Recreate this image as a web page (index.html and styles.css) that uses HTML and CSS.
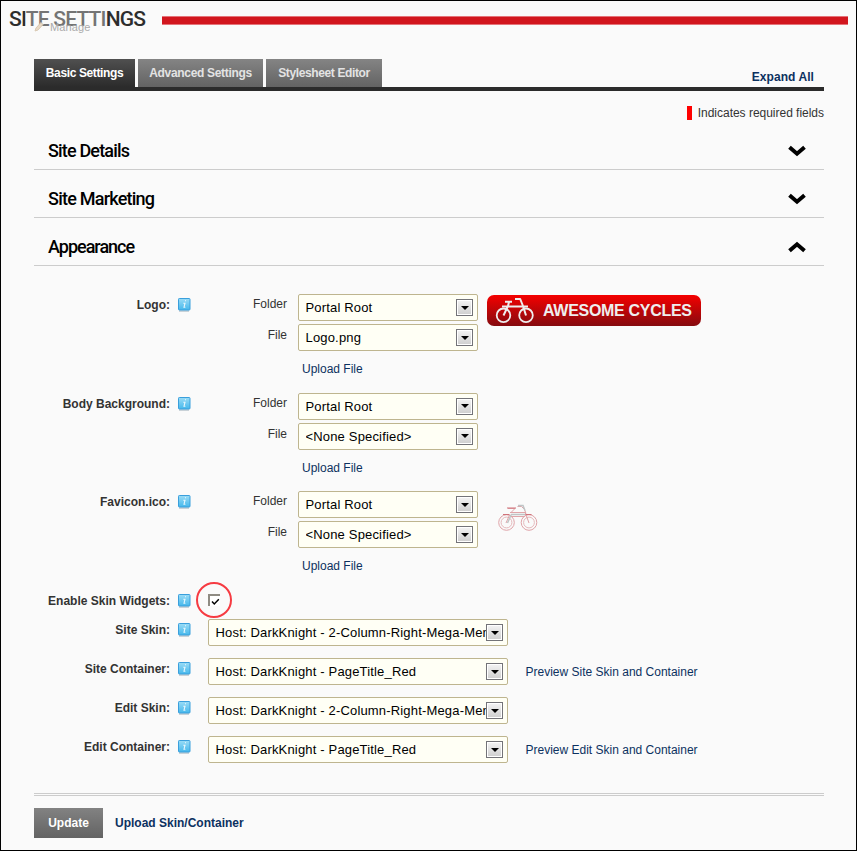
FILE: index.html
```html
<!DOCTYPE html>
<html lang="en">
<head>
<meta charset="utf-8">
<title>Site Settings</title>
<link rel="stylesheet" href="styles.css">
</head>
<body>
<svg class="defs" width="0" height="0" aria-hidden="true">
  <defs>
    <linearGradient id="blue" x1="0" y1="0" x2="0" y2="1"><stop offset="0" stop-color="#9bdcf6"/><stop offset="1" stop-color="#45b8ec"/></linearGradient>
    <symbol id="info" viewBox="0 0 13 14">
      <rect x="1" y="12" width="10" height="2" fill="#c9d2d8"/>
      <rect x=".5" y=".5" width="11.5" height="11.5" rx=".8" fill="url(#blue)" stroke="#3a9fdc"/>
      <path d="M7 2.8h1M5.3 5.2h1.7L6 9.2h1.4" fill="none" stroke="#fff" stroke-width="1.1" opacity=".85"/>
    </symbol>
    <symbol id="down" viewBox="0 0 18 12"><path d="M1.500 2.300 9 8.700 16.500 2.300" fill="none" stroke="#000" stroke-width="4"/></symbol>
    <symbol id="up" viewBox="0 0 18 12"><path d="M1.500 9.700 9 3.300 16.500 9.700" fill="none" stroke="#000" stroke-width="4"/></symbol>
    <symbol id="bike" viewBox="0 0 40 27">
      <g fill="none" stroke="currentColor" stroke-linejoin="round">
        <circle cx="8.5" cy="18.3" r="6.800" stroke-width="1.8"/><circle cx="31" cy="18.3" r="6.800" stroke-width="1.8"/>
        <path d="M8.5 18.500 12.500 10M12.500 9.500H28M13 9l1-4M10 4.800h7M20 2h5.200l3 7.500 2.800 9M7 9.500h6M28 9.500h5" stroke-width="2"/>
      </g>
    </symbol>
  </defs>
</svg>
<main class="page">
  <header class="title">
    <h1>SITE SETTINGS</h1><span class="rule"></span>
    <div class="manage"><svg width="10" height="11" viewBox="0 0 10 11"><path d="M1 10 2 7 7 1.5 9 3.5 4 9Z" fill="#ead9c4" stroke="#d9cab4"/></svg><span>Manage</span></div>
  </header>
  <div class="content">
    <nav class="tabs">
      <a class="tab active t1">Basic Settings</a><a class="tab t2">Advanced Settings</a><a class="tab t3">Stylesheet Editor</a>
      <a class="expand">Expand All</a>
    </nav>
    <p class="required"><i></i><span>Indicates required fields</span></p>
    <h2 class="section"><span class="s1">Site Details</span><svg width="18" height="12"><use href="#down"/></svg></h2>
    <h2 class="section"><span class="s2">Site Marketing</span><svg width="18" height="12"><use href="#down"/></svg></h2>
    <h2 class="section"><span class="s3">Appearance</span><svg width="18" height="12"><use href="#up"/></svg></h2>

    <div class="assets">
      <div class="asset">
        <label>Logo:</label><svg class="info"><use href="#info"/></svg>
        <div class="names"><span>Folder</span><span>File</span></div>
        <div class="picks"><div class="select"><span>Portal Root</span><b></b></div><div class="select"><span>Logo.png</span><b></b></div><a>Upload File</a></div>
        <div class="logo"><svg width="40" height="27"><use href="#bike"/></svg><span>AWESOME CYCLES</span></div>
      </div>
      <div class="asset">
        <label>Body Background:</label><svg class="info"><use href="#info"/></svg>
        <div class="names"><span>Folder</span><span>File</span></div>
        <div class="picks"><div class="select"><span>Portal Root</span><b></b></div><div class="select"><span>&lt;None Specified&gt;</span><b></b></div><a>Upload File</a></div>
      </div>
      <div class="asset">
        <label>Favicon.ico:</label><svg class="info"><use href="#info"/></svg>
        <div class="names"><span>Folder</span><span>File</span></div>
        <div class="picks"><div class="select"><span>Portal Root</span><b></b></div><div class="select"><span>&lt;None Specified&gt;</span><b></b></div><a>Upload File</a></div>
        <svg class="favicon" width="40" height="28" viewBox="0 0 40 28">
          <g fill="none" stroke="#dfa3a8"><circle cx="8.5" cy="18.5" r="7.8"/><circle cx="31" cy="18.5" r="7.8"/><circle cx="8.5" cy="18.5" r="5.4" stroke="#e5b9bc"/><circle cx="31" cy="18.5" r="5.4" stroke="#e5b9bc"/>
          <path d="M8 19 12 10M27 8l4 11M10 4.500h7l-4 4M19.500 2.500h4l3 3 1.500 4"/><path d="M13 10.500h14M9.500 19l3.500-8M20 1.500h5l2 5" stroke="#bfc5c6" stroke-width="1.500"/><path d="M12 8.500h15M13 12.500h14" stroke="#e0a5a9"/><path d="M5 10.500h6M27.500 10.500h6M9 4h9" stroke="#d0737a"/></g>
        </svg>
      </div>
    </div>

    <div class="widgets"><label>Enable Skin Widgets:</label><svg class="info"><use href="#info"/></svg>
      <div class="ring"><div class="check"><svg width="9" height="8" viewBox="0 0 9 8"><path d="M1 3.500 3.300 6 7.800 1.300" fill="none" stroke="#000" stroke-width="1.500"/></svg></div></div>
    </div>
    <div class="skins">
      <div class="skin"><label>Site Skin:</label><svg class="info"><use href="#info"/></svg><div class="select wide"><span>Host: DarkKnight - 2-Column-Right-Mega-Menu</span><b></b></div></div>
      <div class="skin"><label>Site Container:</label><svg class="info"><use href="#info"/></svg><div class="select wide"><span>Host: DarkKnight - PageTitle_Red</span><b></b></div><a>Preview Site Skin and Container</a></div>
      <div class="skin"><label>Edit Skin:</label><svg class="info"><use href="#info"/></svg><div class="select wide"><span>Host: DarkKnight - 2-Column-Right-Mega-Menu</span><b></b></div></div>
      <div class="skin"><label>Edit Container:</label><svg class="info"><use href="#info"/></svg><div class="select wide"><span>Host: DarkKnight - PageTitle_Red</span><b></b></div><a>Preview Edit Skin and Container</a></div>
    </div>
    <footer><button>Update</button><a>Upload Skin/Container</a></footer>
  </div>
</main>
</body>
</html>
```
FILE: styles.css
```css
* { box-sizing: border-box; }
body { margin: 0; font: 12px/16px "Liberation Sans", Arial, sans-serif; color: #333; }
.defs { position: absolute; }
.page { width: 857px; height: 851px; border: 1px solid #000; background: #fafafa; overflow: hidden; }
h1, h2, p { margin: 0; font-weight: normal; }
a { color: #0c3160; white-space: nowrap; }
svg { flex: none; display: block; }

.title { position: relative; display: flex; height: 58px; padding: 0 8px 0 8px; }
h1 { width: 153px; padding-top: 5px; font: 500 21px/27px Roboto, sans-serif; letter-spacing: -.8px; white-space: nowrap; color: #2d2d2d; }
.rule { flex: 1; height: 9px; margin-top: 15px; background: #d2161e; border: solid #e57379; border-width: 1px 0; }
.manage { position: absolute; left: 24px; top: 9px; width: 81px; height: 26px; padding: 11px 0 0 9px; display: flex; gap: 6px; background: rgba(250,250,250,.35); font-size: 11px; letter-spacing: .1px; color: #aaa; }
.manage span { line-height: 13px; }

.content { width: 790px; margin-left: 33px; }
.tabs { display: flex; gap: 3px; height: 32px; border-bottom: 4px solid #2b2b2b; }
.tab { height: 28px; text-align: center; font-weight: bold; line-height: 28px; color: #e3e3e3; background: linear-gradient(#848484, #636363); }
.tab.active { color: #fff; background: linear-gradient(#505050, #2b2b2b); }
.t1 { width: 101px; letter-spacing: -.38px; }
.t2 { width: 125px; letter-spacing: -.32px; }
.t3 { width: 116px; letter-spacing: -.38px; }
.expand { margin: 10px 10px 0 auto; font-weight: bold; letter-spacing: .07px; }
.required { display: flex; justify-content: flex-end; gap: 6px; height: 37px; padding-top: 14px; }
.required i { width: 5px; height: 14px; margin-top: 1px; background: #f00; }
.required span { letter-spacing: -.02px; }
.section { display: flex; justify-content: space-between; height: 48px; padding: 17px 18px 0 14px; border-bottom: 1px solid #ccc; font: 500 18px/24px Roboto, sans-serif; color: #000; white-space: nowrap; }
.required + .section { height: 42px; padding-top: 11px; }
.section svg { margin-top: 6px; }
.s1 { letter-spacing: -.83px; }
.s2 { letter-spacing: -.77px; }
.s3 { letter-spacing: -1px; }

label { width: 136px; text-align: right; font-weight: bold; white-space: nowrap; }
.info { width: 13px; height: 14px; margin-left: 8px; }
.assets { padding-top: 28px; height: 319px; }
.asset { display: flex; height: 98.5px; }
.asset label { margin-top: 3px; }
.asset > .info { margin-top: 4px; }
.names { width: 96px; display: flex; flex-direction: column; gap: 15px; padding-top: 2px; text-align: right; }
.picks { width: 180px; margin-left: 11px; display: flex; flex-direction: column; gap: 3px; }
.picks a { padding: 7px 4px 0; }
.select { position: relative; display: flex; height: 27px; width: 180px; border: 1px solid #beb58f; border-radius: 2px; background: #fffff5; font-size: 13px; line-height: 25px; color: #000; padding: 0 4px 0 6.5px; }
.select span { flex: 1; min-width: 0; overflow: hidden; white-space: nowrap; letter-spacing: .17px; }
.select b { display: flex; align-items: center; justify-content: center; width: 17px; height: 17px; margin-top: 4px; border: 1px solid #737378; box-shadow: inset 0 0 0 1px #fff; background: linear-gradient(#f4f4f4, #cecece); }
.select b::after { content: ""; border: solid transparent; border-width: 4px 4px 0; border-top-color: #000; }
.logo { display: flex; align-items: center; gap: 8px; width: 214px; height: 31px; margin: 1px 0 0 9px; padding-left: 8px; border-radius: 7px; background: linear-gradient(#f50000, #850b0f); color: #eee; white-space: nowrap; font: bold 16px/30px "Liberation Sans", Arial, sans-serif; letter-spacing: -.3px; }
.favicon { margin: 13px 0 0 20px; }

.widgets { display: flex; height: 34px; padding-top: 8px; }
.widgets .info { margin-top: 1px; }
.ring { width: 36px; height: 36px; margin: -11px 0 0 5px; border: 2px solid #f63b42; border-radius: 50%; display: flex; align-items: center; justify-content: center; }
.check { width: 12px; height: 12px; border: solid #8f8b83; border-width: 2px 0 0 2px; background: #fff; margin: 0 0 0 -1px; }
.check svg { margin: 2px 0 0 1px; }
.skins { height: 174px; }
.skin { display: flex; height: 39px; }
.skin label { margin-top: 3px; }
.skin .info { margin-top: 4px; }
.wide { width: 300px; margin-left: 17px; }
.skin a { margin: 6px 0 0 17.5px; }
footer { display: flex; align-items: center; gap: 12px; height: 45px; padding-top: 12px; border-top: 3px double #ccc; font-weight: bold; }
button { width: 69px; height: 30px; padding: 0; border: 0; background: linear-gradient(#828282, #636363); color: #fff; font: bold 12px "Liberation Sans", Arial, sans-serif; }
```
